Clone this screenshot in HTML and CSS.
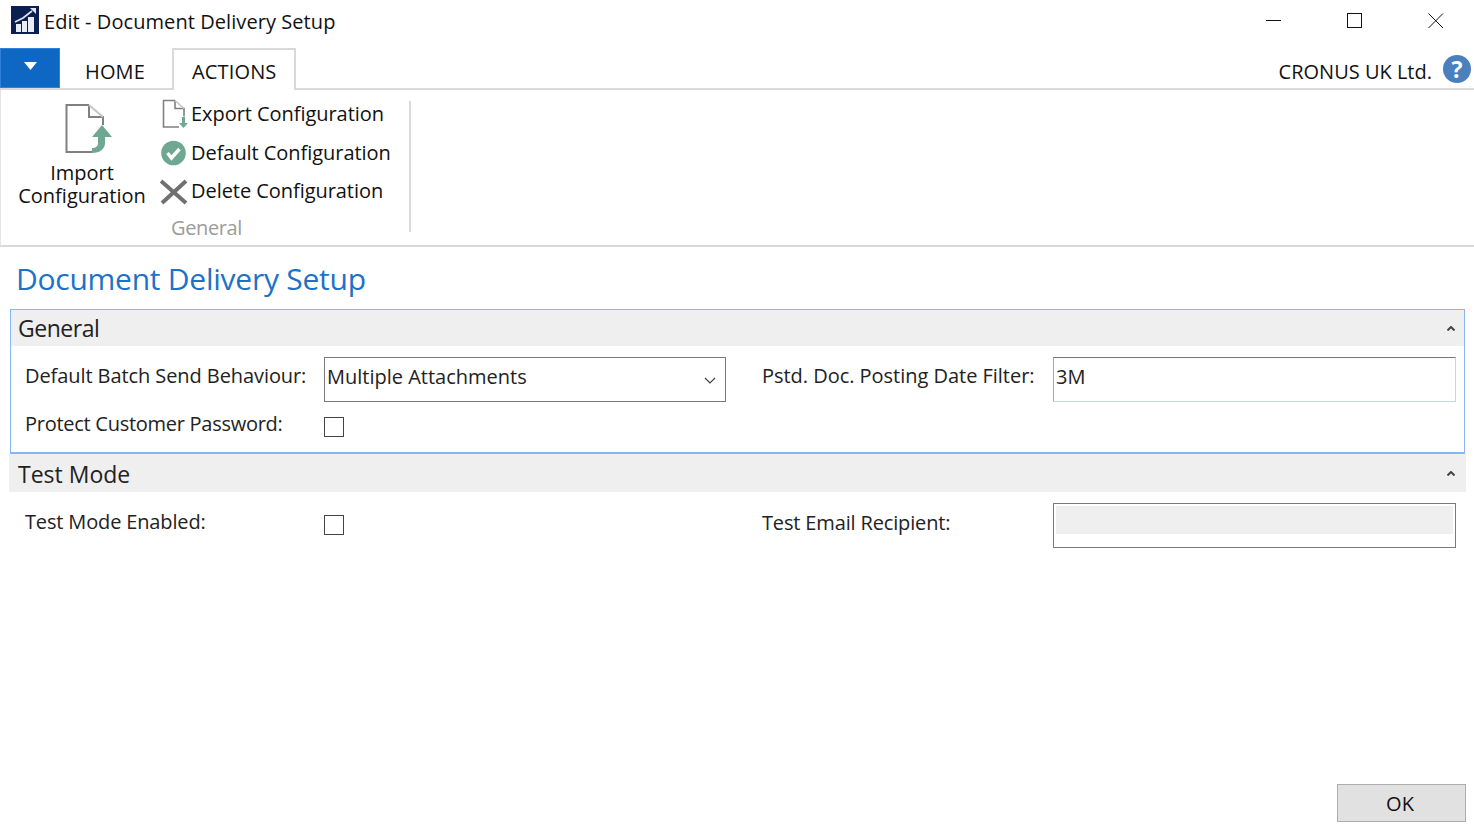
FILE: index.html
```html
<!DOCTYPE html>
<html lang="en">
<head>
<meta charset="utf-8">
<title>Edit - Document Delivery Setup</title>
<link rel="stylesheet" href="styles.css">
</head>
<body>
<div class="window">
  <header class="titlebar">
    <svg class="app-icon" width="28" height="28" viewBox="0 0 28 28"><rect width="28" height="28" fill="#0c2050"/><path d="M5 18h5v8H5zM11 15h5v11h-5zM17 11h6v15h-6z" fill="#e8edf5"/><path d="M4 16 12 12l9-7" fill="none" stroke="#dfe6f2" stroke-width="1.600"/><path d="M19 2h6v6z" fill="#dfe6f2"/></svg>
    <span class="title-text">Edit - Document Delivery Setup</span>
    <div class="win-controls">
      <svg width="16" height="16" viewBox="0 0 16 16"><path d="M0 8.500h15" stroke="#111" fill="none"/></svg>
      <svg width="16" height="16" viewBox="0 0 16 16"><rect x=".5" y="1.500" width="14" height="14" stroke="#111" fill="none"/></svg>
      <svg width="16" height="16" viewBox="0 0 16 16"><path d="M.5 1.500 15 16M15 1.500.5 16" stroke="#111" fill="none"/></svg>
    </div>
  </header>
  <nav class="tabs">
    <button class="menu-btn"><svg width="13" height="8" viewBox="0 0 13 8"><path d="M0 0h13L6.500 8z" fill="#fff"/></svg></button>
    <span class="tab tab-home">HOME</span>
    <span class="tab tab-active">ACTIONS</span>
    <span class="company">CRONUS UK Ltd.</span>
    <span class="help">?</span>
  </nav>
  <section class="ribbon">
    <div class="ribbon-group">
      <div class="large-action">
        <svg width="50" height="52" viewBox="0 0 50 52"><path d="M24 1H1.500v47H27" fill="none" stroke="#808080" stroke-width="2"/><path d="M24 1v12h14v8" fill="none" stroke="#808080" stroke-width="2"/><path d="M24 1l14 12" stroke="#c4c4c4" stroke-width="2"/><path d="M37 21 27 33h6v6c0 3-2 5-6 5v5c8 0 13-4 13-10v-6h7z" fill="#6ea893"/></svg>
        <span class="large-label">Import<br>Configuration</span>
      </div>
      <div class="group-col">
        <ul class="small-actions">
          <li><svg width="28" height="30" viewBox="0 0 28 30"><path d="M15 2.500H3.500V29H19" fill="none" stroke="#808080" stroke-width="1.600"/><path d="M15 2.500v8h9v8" fill="none" stroke="#808080" stroke-width="1.600"/><path d="M15 2.500l9 8" stroke="#c4c4c4" stroke-width="1.500"/><path d="M22 19h3v6h3l-4.500 5-4.500-5h3z" fill="#6ea893"/></svg>Export Configuration</li>
          <li class="mid"><svg width="28" height="30" viewBox="0 0 28 30"><circle cx="13.500" cy="15" r="12.300" fill="#6ea893"/><path d="M7.500 15l4 5 8-9" fill="none" stroke="#fff" stroke-width="3.400"/></svg>Default Configuration</li>
          <li><svg width="28" height="30" viewBox="0 0 28 30"><path d="M1 6l25 22M26 6 2 28" stroke="#707070" stroke-width="4" fill="none"/></svg>Delete Configuration</li>
        </ul>
        <div class="group-name">General</div>
      </div>
    </div>
  </section>
  <main class="content">
    <h1 class="page-title">Document Delivery Setup</h1>
    <section class="panel panel-focus">
      <div class="panel-head panel-head-focus"><span>General</span><svg class="chev" width="8" height="5" viewBox="0 0 8 5"><path d="M.5 4.500 4 1l3.500 3.500" fill="none" stroke="#444" stroke-width="2"/></svg></div>
      <div class="form form-general">
        <label class="lbl lbl-default">Default Batch Send Behaviour:</label>
        <div class="ctl ctl-select">Multiple Attachments<svg width="12" height="7" viewBox="0 0 12 7"><path d="M1 1l5 5 5-5" fill="none" stroke="#444" stroke-width="1.200"/></svg></div>
        <label class="lbl lbl-right lbl-wide">Pstd. Doc. Posting Date Filter:</label>
        <div class="ctl ctl-text">3M</div>
        <label class="lbl lbl-check">Protect Customer Password:</label>
        <div class="check check-general"></div>
      </div>
    </section>
    <section class="panel">
      <div class="panel-head panel-head-plain"><span>Test Mode</span><svg class="chev" width="8" height="5" viewBox="0 0 8 5"><path d="M.5 4.500 4 1l3.500 3.500" fill="none" stroke="#444" stroke-width="2"/></svg></div>
      <div class="form form-test">
        <label class="lbl lbl-test">Test Mode Enabled:</label>
        <div class="check check-test"></div>
        <label class="lbl lbl-right lbl-email">Test Email Recipient:</label>
        <div class="ctl ctl-disabled"><div class="disabled-fill"></div></div>
      </div>
    </section>
  </main>
  <footer class="footer"><button class="ok">OK</button></footer>
</div>
</body>
</html>
```
FILE: styles.css
```css
* { box-sizing: border-box; }
html, body { margin: 0; padding: 0; height: 829px; overflow: hidden; background: #fff; }
body { font-family: "Open Sans", "Noto Sans", "Liberation Sans", sans-serif; font-size: 20px; color: #1a1a1a; }
.window { display: flex; flex-direction: column; height: 829px; }

.titlebar { height: 48px; display: flex; align-items: flex-start; padding: 6px 0 0 11px; flex: none; }
.app-icon { flex: none; }
.title-text { margin-left: 5px; line-height: 31px; color: #111; letter-spacing: .07px; }
.win-controls { margin-left: auto; display: flex; gap: 65px; padding: 6px 30px 0 0; }

.tabs { height: 42px; flex: none; display: flex; align-items: stretch; border-bottom: 2px solid #d9d9d9; position: relative; }
.menu-btn { width: 60px; height: 40px; background: #0f67c4; border: 1px solid #2f80d8; padding: 0 0 4px 1px; display: flex; align-items: center; justify-content: center; }
.tab { line-height: 47px; color: #111; letter-spacing: .15px; }
.tab-home { margin-left: 25px; width: 87px; }
.tab-active { width: 124px; height: 42px; border: 2px solid #d9d9d9; border-bottom: 0; background: #fff; padding-left: 18px; line-height: 44px; }
.company { margin-left: auto; line-height: 47px; color: #111; }
.help { width: 28px; height: 28px; margin: 7px 3px 0 11px; border-radius: 50%; background: #4a80bb; color: #fff; font-weight: 700; font-size: 23px; line-height: 28px; text-align: center; }

.ribbon { height: 157px; flex: none; border-bottom: 2px solid #d9d9d9; border-left: 1px solid #e4e4e4; padding: 11px 0 0; }
.ribbon-group { width: 410px; height: 131px; border-right: 2px solid #d9d9d9; display: flex; }
.large-action { width: 159px; display: flex; flex-direction: column; align-items: center; padding: 3px 0 0 0; flex: none; }
.large-action svg { margin-left: 18px; }
.large-label { text-align: center; line-height: 23px; margin-top: 5px; margin-left: 3px; color: #111; }
.group-col { flex: 1; display: flex; flex-direction: column; }
.small-actions { list-style: none; margin: -7px 0 0; padding: 0; }
.small-actions li { height: 38.500px; display: flex; align-items: center; gap: 3px; white-space: nowrap; letter-spacing: -.05px; color: #111; }
.small-actions li.mid { padding-top: 2px; }
.small-actions svg { flex: none; }
.group-name { color: #9c9c9c; text-align: center; margin-top: 3px; padding-right: 156px; line-height: 30px; letter-spacing: -.02em; }

.content { flex: 1; padding: 0 8px 0 9px; }
.page-title { font-weight: 400; font-size: 30px; color: #1b72c8; margin: 0; padding-left: 7px; line-height: 40px; height: 62px; padding-top: 12px; letter-spacing: -.25px; }
.panel { display: block; }
.panel-focus { margin-left: 1px; margin-right: 1px; height: 145px; border: 1px solid #86b6f6; border-bottom-width: 2px; }
.panel-head { background: #efefef; display: flex; align-items: center; justify-content: space-between; font-size: 23px; letter-spacing: -.02em; color: #222; }
.panel-head-focus { height: 36px; padding: 0 9px 0 7px; }
.panel-head-plain { height: 38px; padding: 1px 11px 0 9px; letter-spacing: 0; }
.chev { flex: none; }

.form { display: grid; grid-template-columns: 299px 402px 327px 403px; column-gap: 0; }
.form-general { padding: 11px 0 0 14px; grid-template-rows: 45px auto; }
.form-test { padding: 11px 0 0 16px; }
.lbl { font-size: 20px; letter-spacing: -.15px; line-height: 38px; color: #222; white-space: nowrap; }
.lbl-default { letter-spacing: -.08px; }
.lbl-right { padding-left: 36px; }
.lbl-wide { letter-spacing: -.03px; }
.lbl-check { line-height: 44px; letter-spacing: -.27px; }
.lbl-test { line-height: 38px; }
.lbl-email { line-height: 40px; }
.ctl { height: 45px; border: 1px solid #7a7a7a; font-size: 20px; line-height: 38px; padding-left: 2px; color: #222; }
.ctl-select { display: flex; align-items: flex-start; justify-content: space-between; padding-right: 9px; }
.ctl-select svg { margin-top: 19px; }
.ctl-text { border-color: #c5d6e8; border-top-color: #4a80b4; border-left-color: #8fb0d0; }
.ctl-disabled { padding: 2px; }
.disabled-fill { height: 28px; background: #efefef; }
.check { width: 20px; height: 20px; border: 1px solid #444; background: #fff; }
.check-general { margin-top: 15px; }
.check-test { margin-top: 12px; }

.footer { flex: none; display: flex; justify-content: flex-end; padding: 0 8px 7px 0; }
.ok { width: 129px; height: 38px; background: #e1e1e1; border: 1px solid #adadad; font: inherit; color: #111; padding: 1px 3px 0 0; }
```
